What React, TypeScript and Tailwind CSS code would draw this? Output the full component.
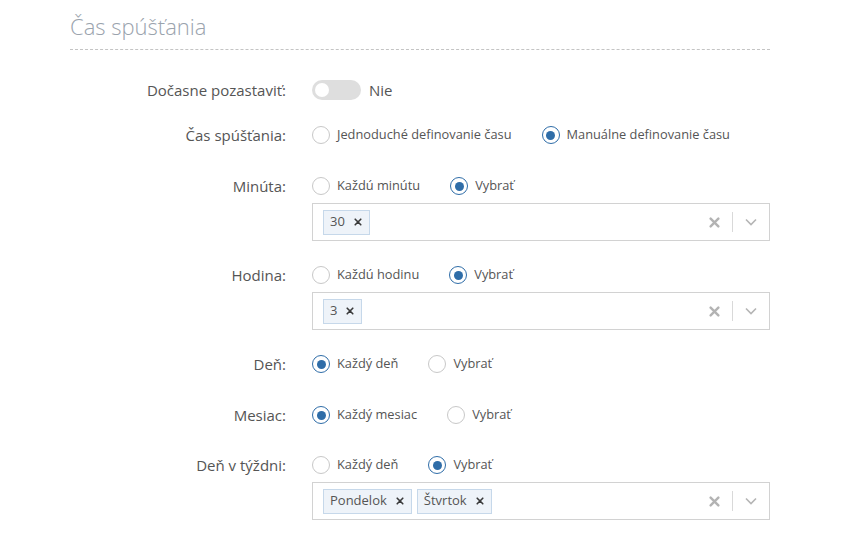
import { useState } from "react";

type Option = { label: string; checked?: boolean };

function Cross({ size, color, width }: { size: number; color: string; width: number }) {
  return (
    <svg width={size} height={size} viewBox="0 0 10 10" fill="none">
      <path d="M1.5 1.5l7 7M8.5 1.5l-7 7" stroke={color} strokeWidth={width} strokeLinecap="round" />
    </svg>
  );
}

function Radio({ label, checked }: Option) {
  return (
    <label className="flex items-center gap-[7px] text-[12.8px] text-[#555] cursor-pointer">
      <span
        className={
          "flex h-[18px] w-[18px] items-center justify-center rounded-full border bg-white " +
          (checked ? "border-[#2f6da8]" : "border-[#c8c8c8]")
        }
      >
        {checked && <span className="h-[9px] w-[9px] rounded-full bg-[#2f6da8]" />}
      </span>
      {label}
    </label>
  );
}

function RadioRow({ options }: { options: Option[] }) {
  return (
    <div className="flex h-[26px] items-center gap-[30px]">
      {options.map((o) => (
        <Radio key={o.label} {...o} />
      ))}
    </div>
  );
}

function MultiSelect({ tags }: { tags: string[] }) {
  return (
    <div className="mt-[4px] flex h-[38px] w-[458px] items-center border border-[#d2d2d2] bg-white pl-[10px]">
      <div className="flex flex-1 items-center gap-[5px]">
        {tags.map((t) => (
          <span
            key={t}
            className="flex h-[25px] items-center gap-[9px] border border-[#c6d8ea] bg-[#eef3f9] pl-[6px] pr-[7px] text-[13px] text-[#555]"
          >
            {t}
            <Cross size={8} color="#3a3a3a" width={2} />
          </span>
        ))}
      </div>
      <span className="px-[12px]">
        <Cross size={11} color="#b3b3b3" width={2.2} />
      </span>
      <span className="h-[20px] w-px bg-[#d9d9d9]" />
      <span className="flex w-[36px] justify-center text-[#b5b5b5]">
        <svg width="12" height="8" viewBox="0 0 12 8" fill="none">
          <path d="M1 1.5l5 5 5-5" stroke="currentColor" strokeWidth="1.6" />
        </svg>
      </span>
    </div>
  );
}

function Row({ label, children }: { label: string; children: React.ReactNode }) {
  return (
    <div className="grid grid-cols-[216px_458px] gap-x-[26px]">
      <div className="flex h-[26px] items-center justify-end text-[15px] text-[#555]">{label}</div>
      <div>{children}</div>
    </div>
  );
}

export default function App() {
  const [paused, setPaused] = useState(false);

  return (
    <div className="min-h-[544px] bg-white font-['Open_Sans',sans-serif]">
      <div className="ml-[70px] w-[700px]">
        <h2 className="pt-[10px] text-[22px] font-light leading-[32px] text-[#9aa3ad]">Čas spúšťania</h2>
        <div className="mt-[7px] border-b border-dashed border-[#c4c4c4]" />

        <div className="mt-[27px] flex flex-col">
          <Row label="Dočasne pozastaviť:">
            <div className="flex h-[26px] items-center gap-[8px]">
              <button
                onClick={() => setPaused(!paused)}
                className="relative h-[20px] w-[49px] rounded-full bg-[#dedede]"
              >
                <span className="absolute left-[3px] top-[3px] h-[14px] w-[14px] rounded-full bg-white" />
              </button>
              <span className="text-[15px] text-[#555]">Nie</span>
            </div>
          </Row>

          <div className="mt-[19px]">
            <Row label="Čas spúšťania:">
              <RadioRow
                options={[
                  { label: "Jednoduché definovanie času" },
                  { label: "Manuálne definovanie času", checked: true },
                ]}
              />
            </Row>
          </div>

          <div className="mt-[25px]">
            <Row label="Minúta:">
              <RadioRow options={[{ label: "Každú minútu" }, { label: "Vybrať", checked: true }]} />
              <MultiSelect tags={["30"]} />
            </Row>
          </div>

          <div className="mt-[21px]">
            <Row label="Hodina:">
              <RadioRow options={[{ label: "Každú hodinu" }, { label: "Vybrať", checked: true }]} />
              <MultiSelect tags={["3"]} />
            </Row>
          </div>

          <div className="mt-[21px]">
            <Row label="Deň:">
              <RadioRow options={[{ label: "Každý deň", checked: true }, { label: "Vybrať" }]} />
            </Row>
          </div>

          <div className="mt-[25px]">
            <Row label="Mesiac:">
              <RadioRow options={[{ label: "Každý mesiac", checked: true }, { label: "Vybrať" }]} />
            </Row>
          </div>

          <div className="mt-[24px]">
            <Row label="Deň v týždni:">
              <RadioRow options={[{ label: "Každý deň" }, { label: "Vybrať", checked: true }]} />
              <MultiSelect tags={["Pondelok", "Štvrtok"]} />
            </Row>
          </div>
        </div>
      </div>
    </div>
  );
}
